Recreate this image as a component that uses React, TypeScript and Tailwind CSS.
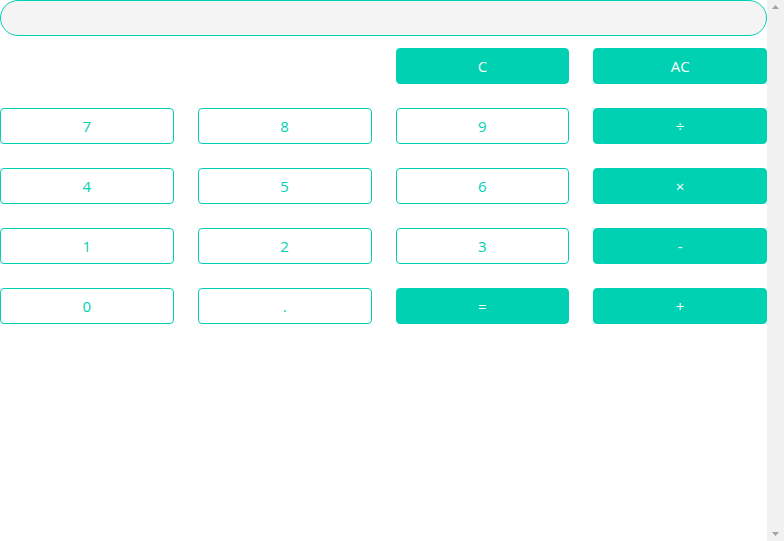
import type { ReactNode } from "react";

type Key = {
  label: string;
  solid?: boolean;
  blank?: boolean;
};

const keys: Key[] = [
  { label: "", blank: true },
  { label: "", blank: true },
  { label: "C", solid: true },
  { label: "AC", solid: true },
  { label: "7" },
  { label: "8" },
  { label: "9" },
  { label: "÷", solid: true },
  { label: "4" },
  { label: "5" },
  { label: "6" },
  { label: "×", solid: true },
  { label: "1" },
  { label: "2" },
  { label: "3" },
  { label: "-", solid: true },
  { label: "0" },
  { label: "." },
  { label: "=", solid: true },
  { label: "+", solid: true }
];

function KeyButton({ children, solid }: { children: ReactNode; solid?: boolean }) {
  return (
    <button
      type="button"
      className={
        solid
          ? "flex h-9 items-center justify-center rounded border border-[#00d1b2] bg-[#00d1b2] text-[15px] text-white"
          : "flex h-9 items-center justify-center rounded border border-[#00d1b2] bg-white text-[15px] text-[#00d1b2]"
      }
    >
      {children}
    </button>
  );
}

export default function App() {
  return (
    <div className="flex h-[541px] bg-white font-['Open_Sans','Noto_Sans',sans-serif]">
      <main className="min-w-0 flex-1">
        <input
          type="text"
          readOnly
          className="mb-3 block h-9 w-full rounded-full border border-[#00d1b2] bg-[#f4f4f4] px-4 outline-none"
        />
        <div className="grid grid-cols-4 gap-x-6 gap-y-6">
          {keys.map((key, i) =>
            key.blank ? (
              <div key={i} className="h-9" />
            ) : (
              <KeyButton key={i} solid={key.solid}>
                {key.label}
              </KeyButton>
            )
          )}
        </div>
      </main>
      {/* page scroll rail */}
      <div className="flex w-[17px] shrink-0 flex-col items-center justify-between bg-[#f1f1f1] py-[5px]">
        <svg width="7" height="4" viewBox="0 0 7 4" aria-hidden="true">
          <path d="M3.5 0 L7 4 L0 4 Z" fill="#a3a3a3" />
        </svg>
        <svg width="7" height="4" viewBox="0 0 7 4" aria-hidden="true">
          <path d="M0 0 L7 0 L3.5 4 Z" fill="#a3a3a3" />
        </svg>
      </div>
    </div>
  );
}
